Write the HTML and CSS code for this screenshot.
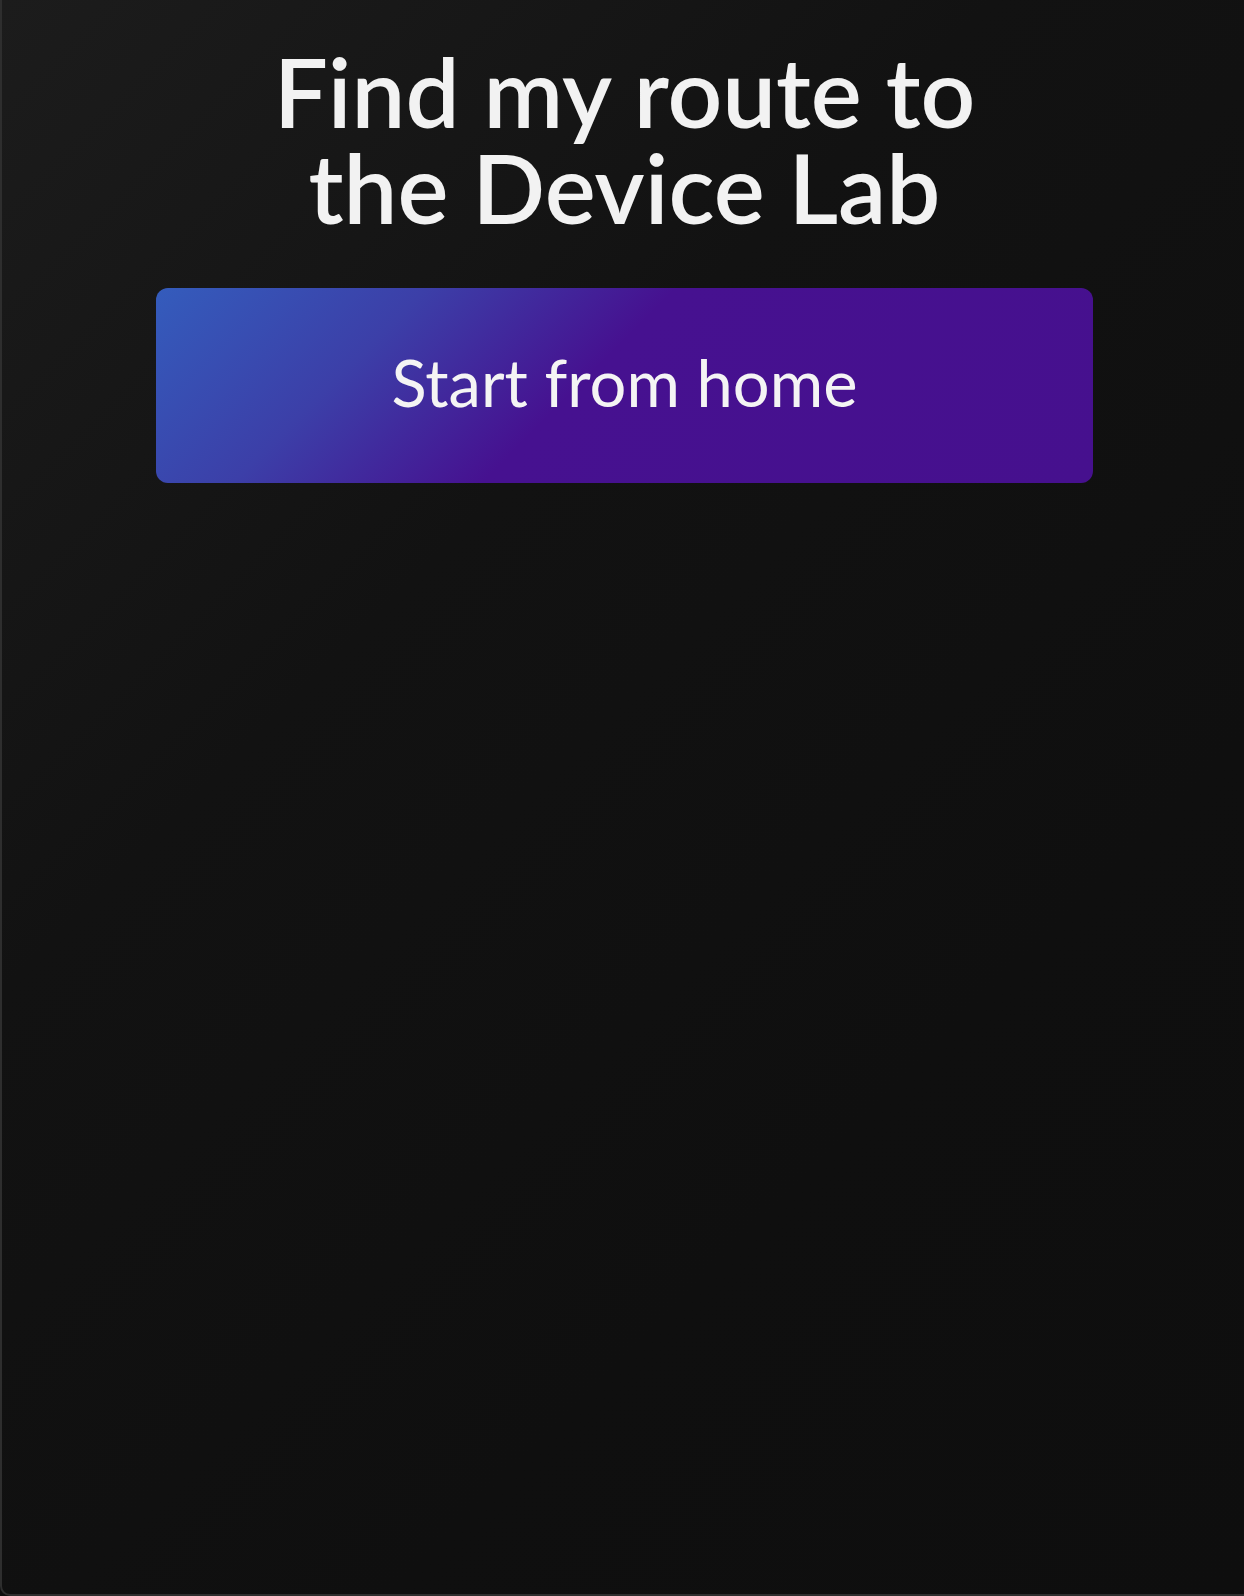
FILE: index.html
```html
<!DOCTYPE html>
<html lang="en">
<head>
<meta charset="utf-8">
<title>Find my route</title>
<link rel="stylesheet" href="styles.css">
</head>
<body>
<main class="screen">
  <h1 class="title">Find my route to<br>the Device Lab</h1>
  <button class="start-btn" type="button">Start from home</button>
</main>
</body>
</html>
```

FILE: styles.css
```css
html, body {
  margin: 0;
  padding: 0;
  background: #0e0e0e;
}

.screen {
  box-sizing: border-box;
  min-height: 1596px;
  padding: 0 0 0 3px;
  border-left: 2px solid #2e2e2e;
  border-bottom: 2px solid #2e2e2e;
  border-bottom-left-radius: 10px;
  background: linear-gradient(135deg, #1c1c1c 0%, #121212 35%, #0f0f0f 70%, #0e0e0e 100%);
  display: flex;
  flex-direction: column;
  align-items: center;
  font-family: "Lato", "Noto Sans", sans-serif;
  color: #f2f2f2;
}

.title {
  margin: 43px 0 0;
  font-size: 96px;
  line-height: 96px;
  font-weight: 600;
  text-align: center;
  letter-spacing: 0;
}

.start-btn {
  margin-top: 53px;
  width: 937px;
  height: 195px;
  border: none;
  border-radius: 12px;
  background: linear-gradient(135deg, #345cbc 0%, #3c3fa8 24%, #461190 46%, #46108e 100%);
  color: #f4f4f4;
  font-family: "Lato", "Noto Sans", sans-serif;
  font-size: 65px;
  font-weight: 400;
  display: flex;
  align-items: center;
  justify-content: center;
  padding: 0 0 8px 0;
}
```
